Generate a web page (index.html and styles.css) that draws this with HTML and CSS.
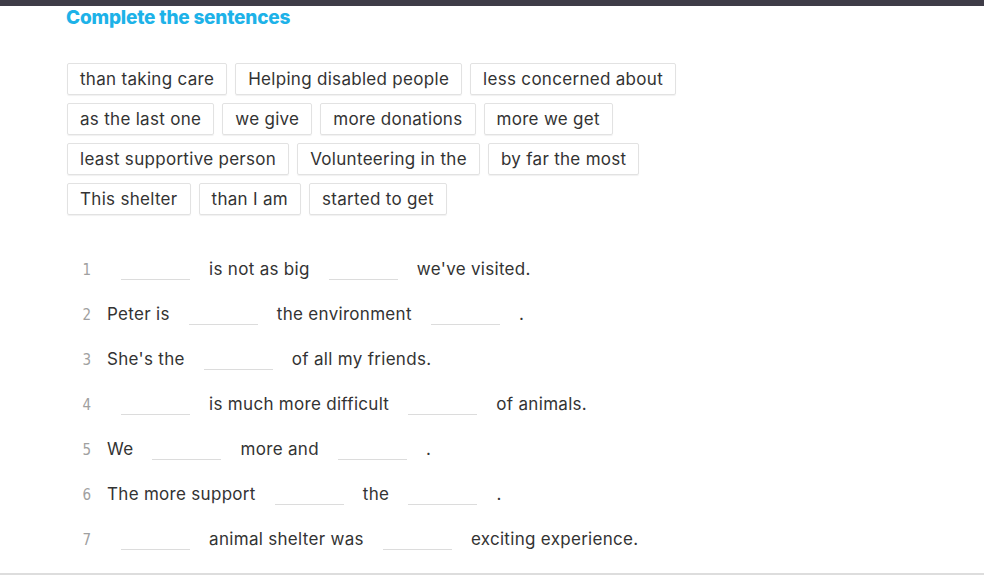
FILE: index.html
```html
<!DOCTYPE html>
<html lang="en">
<head>
<meta charset="utf-8">
<title>Complete the sentences</title>
<link rel="stylesheet" href="styles.css">
</head>
<body>
<div class="topbar"></div>
<main class="exercise">
  <h1 class="title">Complete the sentences</h1>
  <div class="bank">
    <div class="bank-row">
      <span class="chip">than taking care</span>
      <span class="chip">Helping disabled people</span>
      <span class="chip">less concerned about</span>
    </div>
    <div class="bank-row">
      <span class="chip">as the last one</span>
      <span class="chip">we give</span>
      <span class="chip">more donations</span>
      <span class="chip">more we get</span>
    </div>
    <div class="bank-row">
      <span class="chip">least supportive person</span>
      <span class="chip">Volunteering in the</span>
      <span class="chip">by far the most</span>
    </div>
    <div class="bank-row">
      <span class="chip">This shelter</span>
      <span class="chip">than I am</span>
      <span class="chip">started to get</span>
    </div>
  </div>
  <ol class="sentences">
    <li class="sentence"><span class="num">1</span><span class="text"><span class="blank"></span> is not as big <span class="blank"></span> we've visited.</span></li>
    <li class="sentence"><span class="num">2</span><span class="text">Peter is <span class="blank"></span> the environment <span class="blank"></span> .</span></li>
    <li class="sentence"><span class="num">3</span><span class="text">She's the <span class="blank"></span> of all my friends.</span></li>
    <li class="sentence"><span class="num">4</span><span class="text"><span class="blank"></span> is much more difficult <span class="blank"></span> of animals.</span></li>
    <li class="sentence"><span class="num">5</span><span class="text">We <span class="blank"></span> more and <span class="blank"></span> .</span></li>
    <li class="sentence"><span class="num">6</span><span class="text">The more support <span class="blank"></span> the <span class="blank"></span> .</span></li>
    <li class="sentence"><span class="num">7</span><span class="text"><span class="blank"></span> animal shelter was <span class="blank"></span> exciting experience.</span></li>
  </ol>
</main>
<div class="bottom-rule"></div>
</body>
</html>
```
FILE: styles.css
```css
html, body {
  margin: 0;
  padding: 0;
  background: #ffffff;
}
body {
  font-family: Inter, "Noto Sans", sans-serif;
  color: #333333;
  width: 984px;
  height: 578px;
  overflow: hidden;
  display: flex;
  flex-direction: column;
}
.topbar {
  height: 6px;
  background: #3e3c47;
  flex: none;
}
.exercise {
  flex: 1;
  padding-left: 66px;
}
.title {
  margin: 0;
  font-size: 19px;
  line-height: 24px;
  font-weight: 800;
  color: #1db2e8;
  letter-spacing: -0.2px;
}
.bank {
  margin-top: 33px;
  display: flex;
  flex-direction: column;
  gap: 8px;
  padding-left: 1px;
}
.bank-row {
  display: flex;
  gap: 8px;
}
.chip {
  display: inline-block;
  height: 30px;
  line-height: 30px;
  padding: 0 12px;
  border: 1px solid #e2e2e2;
  border-radius: 2px;
  box-shadow: 0 1px 1px rgba(0,0,0,0.06);
  font-size: 17px;
  letter-spacing: 0.3px;
  color: #333;
  white-space: nowrap;
}
.sentences {
  list-style: none;
  margin: 32px 0 0 0;
  padding: 0;
  display: flex;
  flex-direction: column;
}
.sentence {
  display: flex;
  align-items: center;
  height: 45px;
}
.num {
  width: 41px;
  text-align: right;
  padding-right: 16px;
  box-sizing: border-box;
  font-family: "Liberation Sans Narrow", "DejaVu Sans Condensed", sans-serif;
  font-size: 15px;
  color: #a0a0a0;
  flex: none;
}
.text {
  font-size: 17px;
  letter-spacing: 0.3px;
  white-space: pre;
}
.blank {
  display: inline-block;
  width: 69px;
  height: 14px;
  margin: 0 14px;
  border-bottom: 1px solid #dcdcdc;
  vertical-align: -5px;
}
.bottom-rule {
  height: 0;
  border-top: 2px solid #dddddd;
  margin-bottom: 3px;
  flex: none;
}
```
